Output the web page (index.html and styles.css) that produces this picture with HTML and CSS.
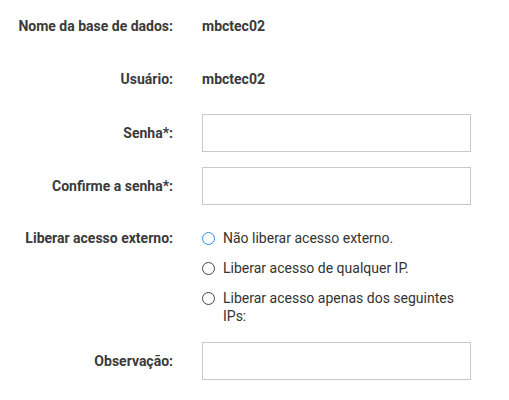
FILE: index.html
```html
<!DOCTYPE html>
<html lang="pt-BR">
<head>
<meta charset="utf-8">
<title>Banco de dados</title>
<link rel="stylesheet" href="styles.css">
</head>
<body>
<form class="form">
  <div class="row">
    <div class="label">Nome da base de dados:</div>
    <div class="value"><span class="static">mbctec02</span></div>
  </div>
  <div class="row">
    <div class="label">Usuário:</div>
    <div class="value"><span class="static">mbctec02</span></div>
  </div>
  <div class="row">
    <label class="label" for="senha">Senha*:</label>
    <div class="value"><input class="field" id="senha" type="password"></div>
  </div>
  <div class="row">
    <label class="label" for="conf">Confirme a senha*:</label>
    <div class="value"><input class="field" id="conf" type="password"></div>
  </div>
  <div class="row row-top">
    <div class="label label-top">Liberar acesso externo:</div>
    <div class="value radios">
      <label class="radio"><input type="radio" name="ext" class="dot dot-focus"><span>Não liberar acesso externo.</span></label>
      <label class="radio"><input type="radio" name="ext" class="dot"><span>Liberar acesso de qualquer IP.</span></label>
      <label class="radio"><input type="radio" name="ext" class="dot"><span>Liberar acesso apenas dos seguintes IPs:</span></label>
    </div>
  </div>
  <div class="row">
    <label class="label" for="obs">Observação:</label>
    <div class="value"><input class="field" id="obs" type="text"></div>
  </div>
</form>
</body>
</html>
```

FILE: styles.css
```css
html, body {
  margin: 0;
  padding: 0;
  background: #fff;
}
body {
  font-family: Roboto, "Liberation Sans", Arial, sans-serif;
  font-size: 14px;
  color: #333;
}
.form {
  display: flex;
  flex-direction: column;
  gap: 15px;
  padding: 7px 0 0 8px;
}
.row {
  display: grid;
  grid-template-columns: 165px 269px;
  column-gap: 29px;
  align-items: center;
  min-height: 38px;
}
.row + .row {
  margin-top: 0;
}
.row:nth-child(3) {
  margin-top: 1px;
}
.row-top {
  align-items: start;
}
.label {
  text-align: right;
  font-weight: 700;
  color: #3a3a3a;
  line-height: 18px;
}
.label-top {
  padding-top: 9px;
}
.static {
  font-weight: 700;
  color: #3a3a3a;
}
.field {
  box-sizing: border-box;
  display: block;
  width: 269px;
  height: 38px;
  margin: 0;
  border: 1px solid #c8c8c8;
  border-radius: 0;
  background: #fff;
  font: inherit;
  padding: 0 8px;
  outline: none;
}
.radios {
  display: flex;
  flex-direction: column;
  gap: 12px;
  padding: 9px 0 2px;
}
.radio {
  display: flex;
  align-items: flex-start;
  gap: 8px;
  line-height: 18px;
  color: #333;
}
.dot {
  appearance: none;
  -webkit-appearance: none;
  flex: none;
  width: 13px;
  height: 13px;
  margin: 3px 0 0 0;
  border: 1px solid #444;
  border-radius: 50%;
  background: #fff;
}
.dot-focus {
  border-color: #2a8be6;
}
```
